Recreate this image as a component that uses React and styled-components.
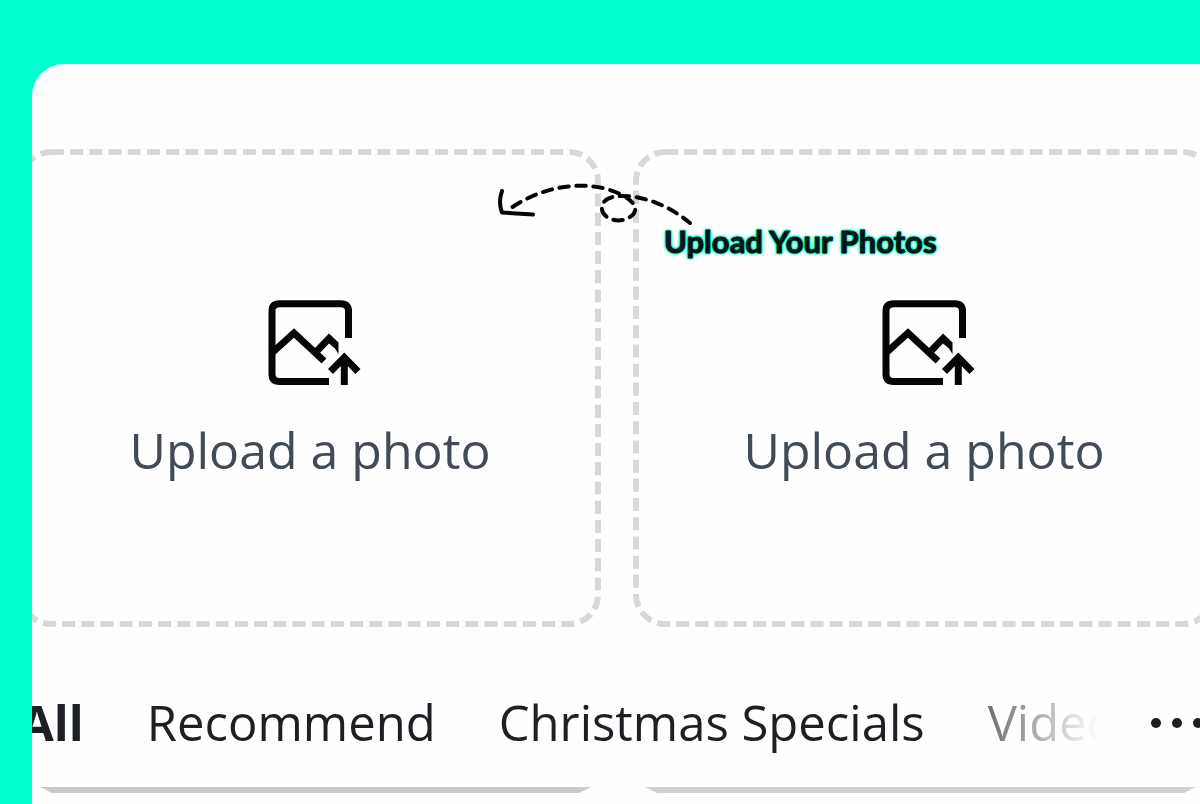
import React from "react";
import styled, { createGlobalStyle } from "styled-components";

const GlobalStyle = createGlobalStyle`
  * {
    box-sizing: border-box;
  }
  body {
    margin: 0;
    background: #00ffd0;
    font-family: "Open Sans", "Noto Sans", sans-serif;
  }
  button {
    margin: 0;
    padding: 0;
    border: 0;
    background: none;
    font-family: inherit;
    cursor: pointer;
  }
`;
const Page = styled.div`
  display: flex;
  height: 100vh;
  padding: 64px 0 0 32px;
  overflow: hidden;
`;
const Panel = styled.main`
  position: relative;
  flex: 1;
  min-width: 0;
  padding-top: 85px;
  border-top-left-radius: 32px;
  background: #fefefe;
  overflow: hidden;
`;
const UploadRow = styled.section`
  display: grid;
  grid-template-columns: 1fr 1fr;
  gap: 32px;
  margin: 0 -15px 0 -13px;
`;
const UploadCard = styled.button`
  position: relative;
  display: flex;
  flex-direction: column;
  align-items: center;
  gap: 24px;
  height: 478px;
  padding-top: 150px;
  border-radius: 32px;
  color: #414a55;
  font-size: 50px;
  line-height: 78px;
  white-space: nowrap;
`;
const DashedOutline = styled.svg`
  position: absolute;
  top: 0;
  left: 0;
  width: 100%;
  height: 100%;
  & rect {
    width: calc(100% - 6px);
    height: calc(100% - 6px);
  }
`;
const PhotoIcon = styled.svg`
  width: 104px;
  height: 88px;
`;
const Hint = styled.div`
  position: absolute;
  top: 112px;
  left: 464px;
  pointer-events: none;
`;
const HintArrow = styled.svg`
  display: block;
  width: 200px;
  height: 52px;
`;
const HintText = styled.span`
  display: block;
  padding-left: 168px;
  color: #021512;
  font-family: Lato, sans-serif;
  font-size: 31px;
  font-weight: 700;
  line-height: 26px;
  white-space: nowrap;
  -webkit-text-stroke: 1px #021512;
  text-shadow: 0 0 2px #00f5c4, 0 0 2px #00f5c4, 0 0 2px #00f5c4,
    0 0 3px #00f5c4, 0 0 3px #00f5c4, 0 0 4px #00f5c4;
`;
const TabBar = styled.nav`
  display: flex;
  align-items: center;
  height: 78px;
  margin: 56px -10px 0 -12px;
`;
const Tabs = styled.div`
  display: flex;
  flex: 1;
  gap: 63px;
  min-width: 0;
  overflow: hidden;
  mask-image: linear-gradient(
    to right,
    #000 calc(100% - 224px),
    transparent calc(100% - 52px)
  );
`;
const Tab = styled.button`
  flex: none;
  color: #1c1f23;
  font-size: 49px;
  font-weight: ${(props) => (props.$active ? 700 : 400)};
  line-height: 78px;
  white-space: nowrap;
`;
const MoreButton = styled.button`
  display: flex;
  flex: none;
  & svg {
    width: 60px;
    height: 12px;
  }
`;
const Previews = styled.section`
  display: grid;
  grid-template-columns: 1fr 1fr;
  gap: 54px;
  margin: 26px 4px 0 8px;
`;
const PreviewEdge = styled.div`
  height: 6px;
  background: ${(props) => props.$color};
  clip-path: polygon(0 0, 100% 0, calc(100% - 12px) 100%, 12px 100%);
`;

const tabs = ["All", "Recommend", "Christmas Specials", "Video"];

const UploadPhoto = () => (
  <UploadCard type="button">
    <DashedOutline fill="none" stroke="#d7d8da" strokeWidth="6" aria-hidden="true">
      <rect x="3" y="3" rx="29" strokeDasharray="13 6.200" />
    </DashedOutline>
    <PhotoIcon viewBox="0 0 104 88" fill="none" stroke="#050505" strokeWidth="7">
      <path d="M90.500 39V12Q90.500 4.800 83 4.800H21.500Q14 4.800 14 12V75Q14 82.500 21.500 82.500H71" />
      <path d="M15 53L36 34L66 62" />
      <path
        d="M55 51L71 34.500L80.500 43.500V55L77 49.500L71 44.500L61 55Z"
        fill="#050505"
        stroke="none"
      />
      <path d="M86.300 86V58M72.500 72.500L86.300 58.500L100 72.500" />
    </PhotoIcon>
    <span>Upload a photo</span>
  </UploadCard>
);

function App() {
  return (
    <>
      <GlobalStyle />
      <Page>
        <Panel>
          <UploadRow>
            <UploadPhoto />
            <UploadPhoto />
          </UploadRow>
          <Hint>
            <HintArrow
              viewBox="0 0 200 52"
              fill="none"
              stroke="#050505"
              strokeWidth="4"
              strokeLinecap="round"
              strokeLinejoin="round"
            >
              <path d="M6 15Q2 26 6 36.500L37 38.500" />
              <path
                d="M16.500 31C45 12 78 6 107 12C140 21 145 34 134 41C122 49 104 42 106 30C108 19 129 17 152 24C168 29 182 37 194 47"
                strokeDasharray="9.500 7.500"
              />
            </HintArrow>
            <HintText>Upload Your Photos</HintText>
          </Hint>
          <TabBar>
            <Tabs>
              {tabs.map((name) => (
                <Tab key={name} type="button" $active={name === "All"}>
                  {name}
                </Tab>
              ))}
            </Tabs>
            <MoreButton type="button" aria-label="More categories">
              <svg viewBox="0 0 60 12" fill="#1c1f23">
                <circle cx="6" cy="7" r="5" />
                <circle cx="27" cy="7" r="5" />
                <circle cx="48" cy="7" r="5" />
              </svg>
            </MoreButton>
          </TabBar>
          <Previews>
            <PreviewEdge $color="#c9cbca" />
            <PreviewEdge $color="#d0d1d0" />
          </Previews>
        </Panel>
      </Page>
    </>
  );
}

export default App;
